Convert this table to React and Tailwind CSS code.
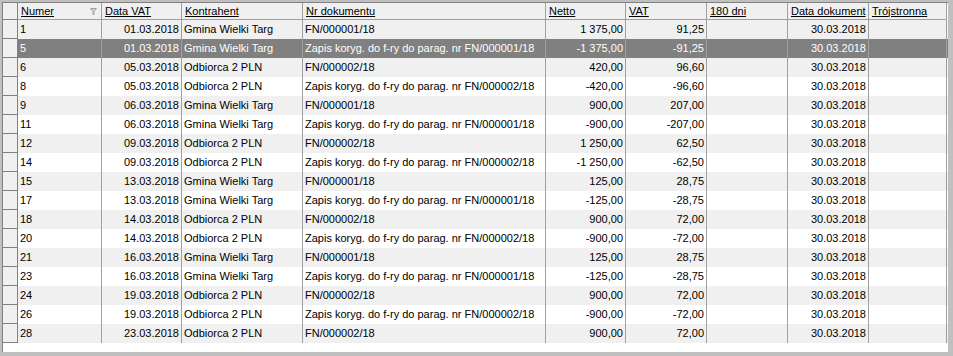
import React from "react";

const Z1 = "Zapis koryg. do f-ry do parag. nr FN/000001/18";
const Z2 = "Zapis koryg. do f-ry do parag. nr FN/000002/18";
const G = "Gmina Wielki Targ";
const O = "Odbiorca 2 PLN";

const rows = [
  ["1", "01.03.2018", G, "FN/000001/18", "1 375,00", "91,25"],
  ["5", "01.03.2018", G, Z1, "-1 375,00", "-91,25"],
  ["6", "05.03.2018", O, "FN/000002/18", "420,00", "96,60"],
  ["8", "05.03.2018", O, Z2, "-420,00", "-96,60"],
  ["9", "06.03.2018", G, "FN/000001/18", "900,00", "207,00"],
  ["11", "06.03.2018", G, Z1, "-900,00", "-207,00"],
  ["12", "09.03.2018", O, "FN/000002/18", "1 250,00", "62,50"],
  ["14", "09.03.2018", O, Z2, "-1 250,00", "-62,50"],
  ["15", "13.03.2018", G, "FN/000001/18", "125,00", "28,75"],
  ["17", "13.03.2018", G, Z1, "-125,00", "-28,75"],
  ["18", "14.03.2018", O, "FN/000002/18", "900,00", "72,00"],
  ["20", "14.03.2018", O, Z2, "-900,00", "-72,00"],
  ["21", "16.03.2018", G, "FN/000001/18", "125,00", "28,75"],
  ["23", "16.03.2018", G, Z1, "-125,00", "-28,75"],
  ["24", "19.03.2018", O, "FN/000002/18", "900,00", "72,00"],
  ["26", "19.03.2018", O, Z2, "-900,00", "-72,00"],
  ["28", "23.03.2018", O, "FN/000002/18", "900,00", "72,00"],
];

const GRID =
  "grid grid-cols-[15px_84px_80px_121px_243px_80px_81px_81px_81px_78px]";

function FilterIcon() {
  return (
    <svg width="7" height="7" viewBox="0 0 7 7" className="shrink-0">
      <path d="M0.5 0.5 H6.5 L4 3.5 V6.5 H3 V3.5 Z" fill="#d8d8d8" stroke="#a0a0a0" strokeWidth="1" />
    </svg>
  );
}

function HeaderCell({ children, icon }) {
  return (
    <div className="h-[17px] border-r border-b border-[#a0a0a0] bg-[#f0f0f0] pl-[3px] pr-[4px] flex items-center justify-between overflow-hidden">
      <span className="underline leading-[15px] whitespace-nowrap">{children}</span>
      {icon ? <FilterIcon /> : null}
    </div>
  );
}

function Cell({ children, right }) {
  return (
    <div
      className={
        "h-[19px] border-r border-[#a0a0a0] px-[2px] leading-[19px] whitespace-nowrap overflow-hidden " +
        (right ? "text-right" : "text-left")
      }
    >
      {children}
    </div>
  );
}

export default function App() {
  return (
    <div
      className="w-[953px] h-[356px] bg-[#c0c0c0] pl-[2px] pt-[2px] pr-[5px] pb-[4px]"
      style={{ fontFamily: '"Liberation Sans", Arial, sans-serif' }}
    >
      <div className="w-full h-full bg-white border-l border-t border-[#808080] text-[11px] text-black overflow-hidden">
        <div className={GRID}>
          <div className="h-[17px] bg-[#f0f0f0] border-r border-b border-[#808080]" />
          <HeaderCell icon>Numer</HeaderCell>
          <HeaderCell>Data VAT</HeaderCell>
          <HeaderCell>Kontrahent</HeaderCell>
          <HeaderCell>Nr dokumentu</HeaderCell>
          <HeaderCell>Netto</HeaderCell>
          <HeaderCell>VAT</HeaderCell>
          <HeaderCell>180 dni</HeaderCell>
          <HeaderCell>Data dokument</HeaderCell>
          <HeaderCell>Trójstronna</HeaderCell>
        </div>
        {rows.map((r, i) => {
          const sel = i === 1;
          const bg = sel ? "bg-[#808080] text-white" : i % 2 === 0 ? "bg-[#f0f0f0]" : "bg-white";
          return (
            <div key={i} className={GRID + " " + bg}>
              <div className="h-[19px] bg-[#f0f0f0] border-r border-b border-[#808080]" />
              <Cell>{r[0]}</Cell>
              <Cell right>{r[1]}</Cell>
              <Cell>{r[2]}</Cell>
              <Cell>{r[3]}</Cell>
              <Cell right>{r[4]}</Cell>
              <Cell right>{r[5]}</Cell>
              <Cell />
              <Cell right>30.03.2018</Cell>
              <Cell />
            </div>
          );
        })}
      </div>
    </div>
  );
}
